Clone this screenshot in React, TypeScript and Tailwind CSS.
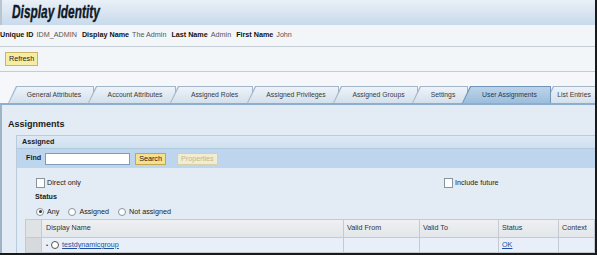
import React from 'react';

const tabs = [
  { label: 'General Attributes', w: 86 },
  { label: 'Account Attributes', w: 88 },
  { label: 'Assigned Roles', w: 83 },
  { label: 'Assigned Privileges', w: 92 },
  { label: 'Assigned Groups', w: 85 },
  { label: 'Settings', w: 56 },
  { label: 'User Assignments', w: 89, active: true },
  { label: 'List Entries', w: 52 },
];

function Tab({ label, w, active, first }: { label: string; w: number; active?: boolean; first?: boolean }) {
  return (
    <div
      className={`relative h-[17px] shrink-0 [clip-path:polygon(8px_0,100%_0,100%_100%,0_100%)] ${
        active ? 'bg-[#6f94b8] z-10' : 'bg-[#a3b6c9]'
      } ${first ? '' : '-ml-[6px]'}`}
      style={{ width: w }}
    >
      <div
        className={`absolute inset-x-[1px] top-[1px] bottom-0 flex items-center justify-center pl-[6px] [clip-path:polygon(8px_0,100%_0,100%_100%,0_100%)] ${
          active
            ? 'bg-gradient-to-b from-[#bcd4ea] to-[#9dbddc] text-[#1d3a5c]'
            : 'bg-gradient-to-b from-[#eef3f8] to-[#d3e0ec] text-[#3a3a3a]'
        }`}
      >
        <span className="text-[6.8px] whitespace-nowrap">{label}</span>
      </div>
    </div>
  );
}

function Checkbox({ label }: { label: string }) {
  return (
    <div className="flex items-center gap-[2px]">
      <span className="w-[9px] h-[10px] bg-white border border-[#8a949e]" />
      <span className="text-[7.2px] text-[#222]">{label}</span>
    </div>
  );
}

function Radio({ label, checked }: { label: string; checked?: boolean }) {
  return (
    <div className="flex items-center gap-[3px]">
      <span className="w-[8px] h-[8px] rounded-full bg-white border border-[#8a949e] flex items-center justify-center">
        {checked && <span className="w-[3px] h-[3px] rounded-full bg-[#333]" />}
      </span>
      <span className="text-[7.2px] text-[#222]">{label}</span>
    </div>
  );
}

export default function App() {
  return (
    <div className="w-[597px] h-[255px] overflow-hidden bg-[#f3f6f9] border-r-2 border-b-2 border-[#1a1a1a] font-['Liberation_Sans',Arial,sans-serif] flex flex-col">
      <div className="h-[25px] shrink-0 bg-gradient-to-b from-[#e9f0f7] to-[#c8daeb] border-l-2 border-[#b9c6d2] flex items-center pl-[10px]">
        <h1 className="text-[18px] font-bold italic text-[#111827] scale-x-[0.66] origin-left whitespace-nowrap [-webkit-text-stroke:0.4px_#111827]">
          Display Identity
        </h1>
      </div>

      <div className="h-[22px] shrink-0 flex items-center gap-[3px] text-[7.2px] text-[#555] border-b border-[#c4ccd4]">
        <b className="text-[#111]">Unique ID</b>
        <span className="mr-[2px]">IDM_ADMIN</span>
        <b className="text-[#111]">Display Name</b>
        <span className="mr-[2px]">The Admin</span>
        <b className="text-[#111]">Last Name</b>
        <span className="mr-[2px]">Admin</span>
        <b className="text-[#111]">First Name</b>
        <span>John</span>
      </div>

      <div className="h-[25px] shrink-0 flex items-center pl-[5px] border-b border-[#c4ccd4]">
        <button className="h-[14px] px-[3px] bg-[#f7eca5] border border-[#c9b565] text-[7.2px] text-[#222] leading-none">
          Refresh
        </button>
      </div>

      <div className="h-[14px] shrink-0 bg-[#f5f7fa]" />

      <div className="h-[17px] shrink-0 flex pl-[8px] bg-[#f5f7fa]">
        {tabs.map((t, i) => (
          <Tab key={t.label} {...t} first={i === 0} />
        ))}
      </div>
      <div className="h-[2px] shrink-0 bg-[#8eaecd]" />

      <div className="flex-1 bg-[#e3ecf5] border-l-2 border-[#9fb3c6] pt-[13px]">
        <div className="pl-[6px] text-[9px] font-bold text-[#1a1a1a] h-[17px]">Assignments</div>

        <div className="ml-[14px] border-l border-t border-[#b7cbdd]">
          <div className="h-[13px] bg-gradient-to-b from-[#dde9f4] to-[#cfe0ef] flex items-center pl-[5px] text-[7.2px] font-bold text-[#1a1a1a] border-b border-[#b2c8dc]">
            Assigned
          </div>
          <div className="h-[19px] bg-[#bdd6ee] flex items-center pl-[9px] gap-[4px]">
            <b className="text-[7.2px] text-[#1a1a1a]">Find</b>
            <div className="w-[85px] h-[12px] bg-white border border-[#7f9db9]" />
            <button className="h-[12px] ml-[1px] px-[3px] bg-[#f5e08e] border border-[#c4a84c] text-[7.2px] text-[#222] leading-none">
              Search
            </button>
            <button className="h-[12px] ml-[7px] px-[3px] bg-[#f2ecd0] border border-[#d8cfa4] text-[7.2px] text-[#c0b797] leading-none">
              Properties
            </button>
          </div>

          <div className="pl-[19px] pt-[10px]">
            <div className="flex items-center">
              <div className="w-[408px]">
                <Checkbox label="Direct only" />
              </div>
              <Checkbox label="Include future" />
            </div>
            <div className="mt-[3px] text-[7.2px] font-bold text-[#1a1a1a] -ml-[1px]">Status</div>
            <div className="mt-[4px] flex items-center gap-[9px]">
              <Radio label="Any" checked />
              <Radio label="Assigned" />
              <Radio label="Not assigned" />
            </div>
          </div>

          <div className="mt-[2px] ml-[8px]">
            <table className="w-full border-collapse text-[7.2px] text-[#333]">
              <thead>
                <tr className="h-[18px] bg-gradient-to-b from-[#eef0f2] to-[#e2e6ea]">
                  <th className="w-[16px] border border-[#c3cad1] bg-[#e0e3e6]" />
                  <th className="w-[302px] border border-[#c3cad1] text-left font-normal pl-[4px]">Display Name</th>
                  <th className="w-[76px] border border-[#c3cad1] text-left font-normal pl-[3px]">Valid From</th>
                  <th className="w-[79px] border border-[#c3cad1] text-left font-normal pl-[3px]">Valid To</th>
                  <th className="w-[60px] border border-[#c3cad1] text-left font-normal pl-[3px]">Status</th>
                  <th className="border border-[#c3cad1] text-left font-normal pl-[3px]">Context</th>
                </tr>
              </thead>
              <tbody>
                <tr className="h-[15px] bg-[#e8eff8]">
                  <td className="border border-[#c3cad1] bg-[#d7dadd]" />
                  <td className="border border-[#c3cad1] pl-[4px]">
                    <div className="flex items-center gap-[3px]">
                      <span className="text-[6px] text-[#333]">•</span>
                      <span className="w-[8px] h-[8px] rounded-full border border-[#555] bg-white" />
                      <a className="text-[#1f4fa3] underline">testdynamicgroup</a>
                    </div>
                  </td>
                  <td className="border border-[#c3cad1]" />
                  <td className="border border-[#c3cad1]" />
                  <td className="border border-[#c3cad1] pl-[3px]">
                    <a className="text-[#1f4fa3] underline">OK</a>
                  </td>
                  <td className="border border-[#c3cad1]" />
                </tr>
              </tbody>
            </table>
          </div>
        </div>
      </div>
    </div>
  );
}
